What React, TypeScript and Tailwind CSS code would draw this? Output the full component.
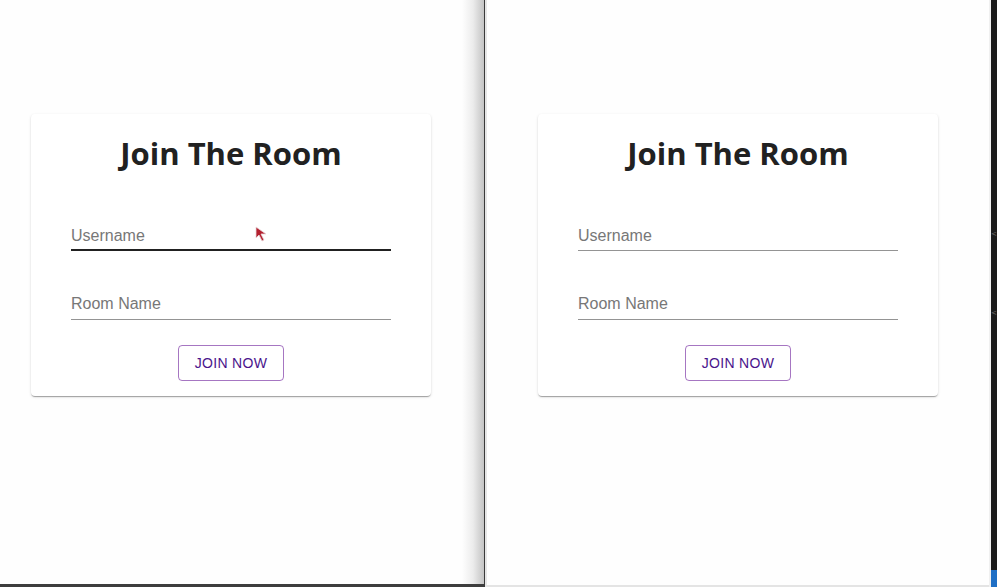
import React from 'react';

function JoinCard({ focused }: { focused?: boolean }) {
  return (
    <div className="relative w-[400px] bg-white rounded-[4px] shadow-[0_2px_1px_-1px_rgba(0,0,0,0.2),0_1px_1px_0_rgba(0,0,0,0.14),0_1px_3px_0_rgba(0,0,0,0.12)] px-[40px] pt-[19px] pb-[15px]">
      <h1 className="h-[40px] leading-[40px] text-center text-[31px] font-bold text-[#212121] font-['Open_Sans',sans-serif]">
        Join The Room
      </h1>
      <div
        className={
          focused
            ? 'mt-[47px] h-[31px] pt-[2px] border-b-2 border-[#212121] flex items-center'
            : 'mt-[47px] h-[31px] pt-[2px] border-b border-[#949494] flex items-center'
        }
      >
        <input
          placeholder="Username"
          className="w-full bg-transparent outline-none text-[16px] text-[#212121] placeholder:text-[#777777] font-['Liberation_Sans',sans-serif]"
        />
      </div>
      <div className="mt-[37px] h-[32px] border-b border-[#949494] flex items-center">
        <input
          placeholder="Room Name"
          className="w-full bg-transparent outline-none text-[16px] text-[#212121] placeholder:text-[#777777] font-['Liberation_Sans',sans-serif]"
        />
      </div>
      <div className="mt-[25px] flex justify-center">
        <button className="h-[36px] w-[106px] rounded-[4px] border border-[rgba(106,27,154,0.6)] text-[14px] font-normal tracking-[0.3px] text-[#4a148c] font-['Liberation_Sans',sans-serif]">
          JOIN NOW
        </button>
      </div>
      {focused && (
        <svg className="absolute left-[224px] top-[112px]" width="13" height="16" viewBox="0 0 13 16">
          <path d="M1 1 L1 12 L4 9 L7 15 L9 14 L6 8 L11 8 Z" fill="#b3202f" stroke="#e8d8da" strokeWidth="0.8" />
        </svg>
      )}
    </div>
  );
}

export default function App() {
  return (
    <div className="flex w-[997px] h-[587px] overflow-hidden bg-white">
      <div className="flex flex-col w-[484px] shrink-0">
        <div className="flex flex-1">
          <div className="w-[462px] shrink-0 bg-[#fefefe] pt-[114px] flex justify-center items-start">
            <JoinCard focused />
          </div>
          <div className="flex-1 bg-gradient-to-r from-[#fefefe] via-[#ececec] to-[#c4c4c4]" />
        </div>
        <div className="h-[3px] bg-[#3d3d3d]" />
      </div>
      <div className="w-px shrink-0 bg-[#3a3a3a]" />
      <div className="w-[2px] shrink-0 bg-[#e6e6e6]" />
      <div className="flex flex-col w-[502px] shrink-0">
        <div className="flex-1 bg-[#fefefe] pt-[114px] flex justify-center items-start">
          <JoinCard />
        </div>
        <div className="h-[2px] bg-[#e4e4e4]" />
      </div>
      <div className="w-[2px] shrink-0 bg-[#f0f0f0]" />
      <div className="w-[6px] min-w-0 shrink-0 overflow-hidden flex flex-col bg-[#1b1b1b] text-[#6b6b6b] text-[7px] leading-[8px] font-['DejaVu_Sans',sans-serif]">
        <span className="mt-[230px]">&lt;</span>
        <span className="mt-[71px]">&lt;</span>
        <div className="mt-auto h-[17px] bg-[#1f6fc5]" />
      </div>
    </div>
  );
}
